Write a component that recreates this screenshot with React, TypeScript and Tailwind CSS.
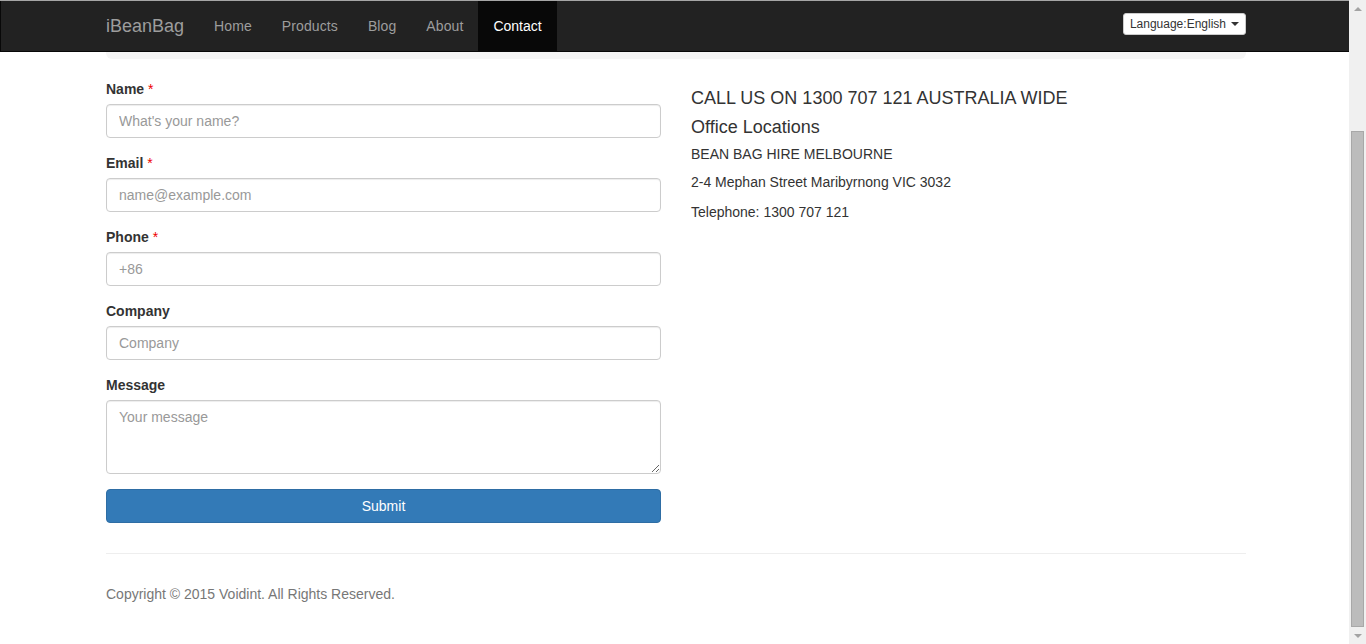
import React from "react";

const font = "font-['Liberation_Sans',Arial,Helvetica,sans-serif]";

const navLinks = ["Home", "Products", "Blog", "About"];

interface FieldProps {
  label: string;
  placeholder: string;
  required?: boolean;
  multiline?: boolean;
}

function cn(...parts: string[]) {
  return parts.join(" ");
}

function Field({ label, placeholder, required, multiline }: FieldProps) {
  const base =
    "block w-full rounded-[4px] border border-[#ccc] bg-white px-3 text-[14px] text-[#555] shadow-[inset_0_1px_1px_rgba(0,0,0,0.075)] outline-none placeholder:text-[#999]";
  return (
    <div className="mb-[15px]">
      <label className="mb-[5px] block text-[14px] font-bold leading-[20px] text-[#333]">
        {label}
        {required && <span className="font-normal text-[#e00]"> *</span>}
      </label>
      {multiline ? (
        <textarea rows={3} placeholder={placeholder} className={cn(base, "h-[74px] py-1.5 leading-[20px]")} />
      ) : (
        <input type="text" placeholder={placeholder} className={cn(base, "h-[34px] py-1.5")} />
      )}
    </div>
  );
}

function Scrollbar() {
  return (
    <div className="flex h-full w-[17px] shrink-0 flex-col items-center bg-[#f0f0f0]">
      <div className="flex h-[17px] w-full items-center justify-center">
        <div className="h-0 w-0 border-x-[4px] border-b-[4px] border-x-transparent border-b-[#a3a3a3]" />
      </div>
      <div className="h-[114px]" />
      <div className="w-[13px] flex-1 border border-[#a8a8a8] bg-[#bcbcbc]" />
      <div className="flex h-[17px] w-full items-center justify-center">
        <div className="h-0 w-0 border-x-[4px] border-t-[4px] border-x-transparent border-t-[#a3a3a3]" />
      </div>
    </div>
  );
}

export default function App() {
  return (
    <div className={cn(font, "flex h-[644px] w-[1366px] overflow-hidden bg-white text-[#333]")}>
      <div className="flex min-w-0 flex-1 flex-col">
        {/* navbar */}
        <div className="h-px bg-[#a6a6a6]" />
        <nav className="flex h-[51px] border-b border-l border-[#080808] bg-[#222]">
          <div className="ml-[90px] flex w-[1155px] items-stretch">
            <a className="px-[15px] text-[18px] leading-[50px] text-[#9d9d9d]">iBeanBag</a>
            {navLinks.map((l) => (
              <a key={l} className="px-[15px] text-[14px] leading-[50px] tracking-[0.1px] text-[#9d9d9d]">
                {l}
              </a>
            ))}
            <a className="bg-[#080808] px-[15px] text-[14px] leading-[50px] text-white">Contact</a>
            <div className="ml-auto pt-[12px]">
              <button className="flex h-[22px] items-center gap-[5px] rounded-[3px] border border-[#ccc] bg-white px-[6px] text-[12px] text-[#333]">
                Language:English
                <span className="h-0 w-0 border-x-[4px] border-t-[4px] border-x-transparent border-t-[#333]" />
              </button>
            </div>
          </div>
        </nav>

        <div className="ml-[106px] w-[1140px]">
          <div className="h-[7px] rounded-b-[6px] bg-[#f5f5f5]" />

          <div className="mt-[20px] flex gap-[30px]">
            <form className="w-[555px]" onSubmit={(e) => e.preventDefault()}>
              <Field label="Name" placeholder="What's your name?" required />
              <Field label="Email" placeholder="name@example.com" required />
              <Field label="Phone" placeholder="+86" required />
              <Field label="Company" placeholder="Company" />
              <Field label="Message" placeholder="Your message" multiline />
              <button
                type="submit"
                className="h-[34px] w-full rounded-[4px] border border-[#2e6da4] bg-[#337ab7] text-[14px] text-white"
              >
                Submit
              </button>
            </form>

            <div className="flex-1">
              <h4 className="mt-[9px] text-[18px] leading-[20px]">CALL US ON 1300 707 121 AUSTRALIA WIDE</h4>
              <h4 className="mt-[9px] text-[18px] leading-[20px]">Office Locations</h4>
              <p className="mt-[7px] text-[14px] leading-[20px]">BEAN BAG HIRE MELBOURNE</p>
              <p className="mt-[8px] text-[14px] leading-[20px]">2-4 Mephan Street Maribyrnong VIC 3032</p>
              <p className="mt-[10px] text-[14px] leading-[20px]">Telephone: 1300 707 121</p>
            </div>
          </div>

          <hr className="mt-[30px] border-t border-[#eee]" />
          <footer className="pt-[30px] text-[14px] leading-[20px] text-[#777]">
            Copyright © 2015 Voidint. All Rights Reserved.
          </footer>
        </div>
      </div>
      <Scrollbar />
    </div>
  );
}
